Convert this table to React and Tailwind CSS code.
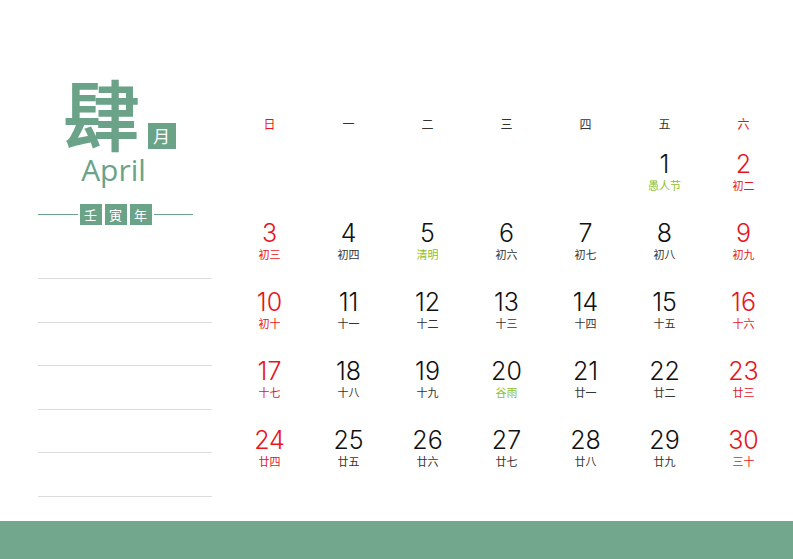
const RED = "text-[#e8141c]";
const GREEN = "text-[#8dbf2a]";

const weekdays = ["日", "一", "二", "三", "四", "五", "六"];

// [day, lunar, kind] kind: "hol" for festival text in green
const days = [
  null, null, null, null, null,
  [1, "愚人节", "hol"], [2, "初二"],
  [3, "初三"], [4, "初四"], [5, "清明", "hol"], [6, "初六"], [7, "初七"], [8, "初八"], [9, "初九"],
  [10, "初十"], [11, "十一"], [12, "十二"], [13, "十三"], [14, "十四"], [15, "十五"], [16, "十六"],
  [17, "十七"], [18, "十八"], [19, "十九"], [20, "谷雨", "hol"], [21, "廿一"], [22, "廿二"], [23, "廿三"],
  [24, "廿四"], [25, "廿五"], [26, "廿六"], [27, "廿七"], [28, "廿八"], [29, "廿九"], [30, "三十"],
];

const cjk = "font-['Noto_Sans_CJK_SC',sans-serif]";

function DayCell({ d, col }) {
  if (!d) return <div className="h-[69px]" />;
  const [num, lunar, kind] = d;
  const weekend = col === 0 || col === 6;
  return (
    <div className="h-[69px] flex flex-col items-center">
      <div className={`font-['Inter',sans-serif] font-light text-[25px] leading-[28px] ${weekend ? RED : "text-[#111]"}`}>
        {num}
      </div>
      <div className={`${cjk} text-[11px] leading-[14px] ${kind === "hol" ? GREEN : weekend ? RED : "text-[#333]"}`}>
        {lunar}
      </div>
    </div>
  );
}

export default function App() {
  return (
    <div className="w-[793px] h-[559px] bg-white flex flex-col overflow-hidden">
      <div className="flex-1 flex">
        {/* left panel */}
        <div className="ml-[38px] w-[174px] flex flex-col">
          <div className="w-[155px] flex flex-col items-center pt-[74px]">
            <div className="flex items-end ml-[8px]">
              <span className={`${cjk} font-normal text-[76px] leading-[76px] text-[#6ba389] [-webkit-text-stroke:2px_#6ba389]`}>肆</span>
              <span className={`${cjk} ml-[8px] mb-[1px] w-[28px] h-[26px] bg-[#6ba389] text-white text-[17px] leading-[26px] text-center`}>月</span>
            </div>
            <div className="font-['Open_Sans',sans-serif] text-[30px] leading-[34px] text-[#6ba389] mt-[3px] -ml-[4px]">April</div>
            <div className="flex items-center mt-[17px] w-full">
              <div className="flex-1 h-px bg-[#6ba389]" />
              <div className="flex gap-[3px] mx-[2px]">
                {["壬", "寅", "年"].map((c) => (
                  <span key={c} className={`${cjk} w-[22px] h-[21px] bg-[#6ba389] text-white text-[13px] leading-[21px] text-center`}>
                    {c}
                  </span>
                ))}
              </div>
              <div className="flex-1 h-px bg-[#6ba389]" />
            </div>
          </div>
          <div className="mt-[53px] flex flex-col gap-[42.6px]">
            {[0, 1, 2, 3, 4, 5].map((i) => (
              <div key={i} className="h-px bg-[#dcdcdc]" />
            ))}
          </div>
        </div>

        {/* calendar */}
        <div className="ml-[18px] w-[553px] pt-[115px]">
          <div className="grid grid-cols-7 h-[35px]">
            {weekdays.map((w, i) => (
              <div key={w} className={`${cjk} text-[12px] leading-[18px] text-center ${i === 0 || i === 6 ? RED : "text-[#333]"}`}>
                {w}
              </div>
            ))}
          </div>
          <div className="grid grid-cols-7">
            {days.map((d, i) => (
              <DayCell key={i} d={d} col={i % 7} />
            ))}
          </div>
        </div>
      </div>
      <div className="h-[38px] bg-[#72a78e]" />
    </div>
  );
}
